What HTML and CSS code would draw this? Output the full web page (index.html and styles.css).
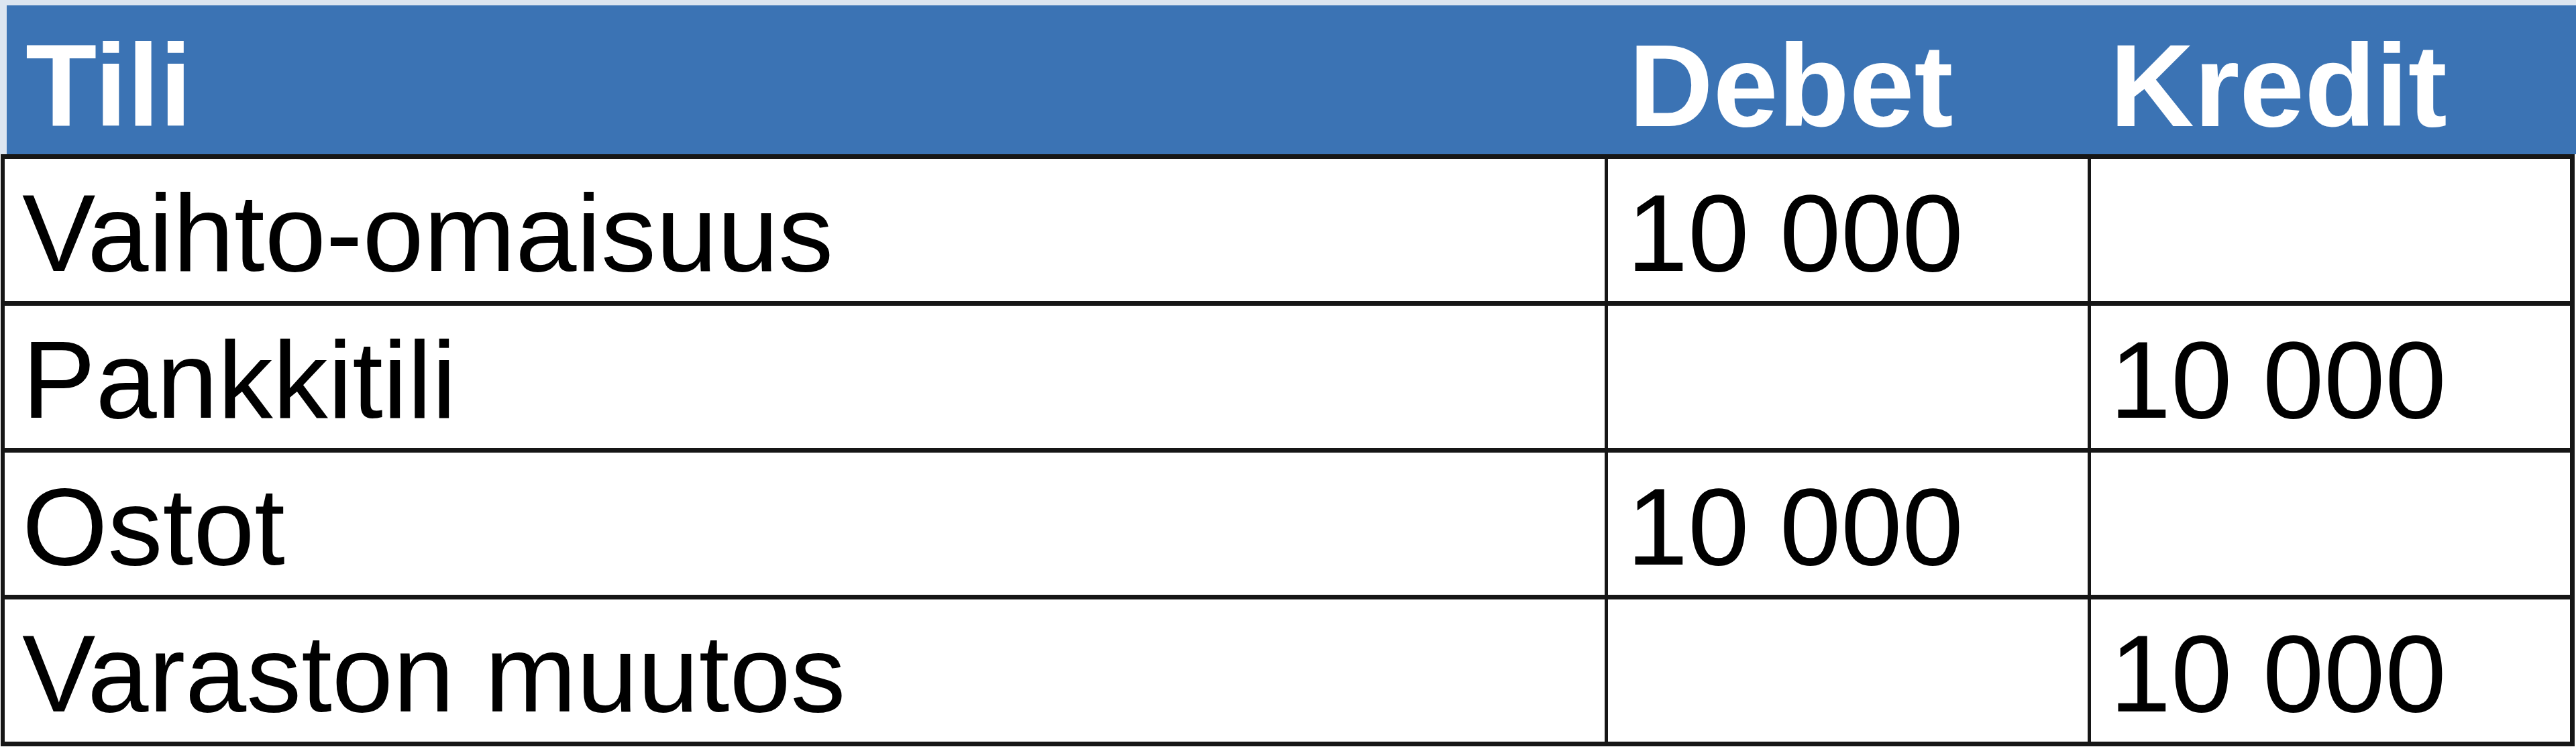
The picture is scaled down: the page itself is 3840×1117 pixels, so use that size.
FILE: index.html
```html
<!DOCTYPE html>
<html lang="fi">
<head>
<meta charset="utf-8">
<title>Tili – Debet – Kredit</title>
<link rel="stylesheet" href="styles.css">
</head>
<body>
<div class="sheet">
  <div class="head" role="row">
    <div class="hcell" role="columnheader">Tili</div>
    <div class="hcell hcell-num" role="columnheader">Debet</div>
    <div class="hcell" role="columnheader">Kredit</div>
  </div>
  <div class="grid" role="table">
    <div class="cell cell-name">Vaihto-omaisuus</div>
    <div class="cell">10 000</div>
    <div class="cell cell-last"></div>

    <div class="cell cell-name">Pankkitili</div>
    <div class="cell"></div>
    <div class="cell cell-last">10 000</div>

    <div class="cell cell-name">Ostot</div>
    <div class="cell">10 000</div>
    <div class="cell cell-last"></div>

    <div class="cell cell-name">Varaston muutos</div>
    <div class="cell"></div>
    <div class="cell cell-last">10 000</div>
  </div>
</div>
</body>
</html>
```

FILE: styles.css
```css
* {
  box-sizing: border-box;
}

html, body {
  margin: 0;
  padding: 0;
  background: #ffffff;
}

body {
  font-family: "Liberation Sans", Arial, sans-serif;
  color: #000000;
}

.sheet {
  width: 3840px;
  height: 1117px;
  overflow: hidden;
  background: linear-gradient(#dce5f0 0, #dce5f0 230px, #ffffff 230px);
  padding-top: 8px;
}

.head {
  margin-left: 10px;
  height: 222px;
  background: #3b73b4;
  display: grid;
  grid-template-columns: 2387px 720px 723px;
}

.hcell {
  color: #ffffff;
  font-weight: bold;
  font-size: 174px;
  line-height: normal;
  padding: 19px 0 0 28px;
  white-space: nowrap;
}

.hcell-num {
  padding-left: 31px;
}

.grid {
  margin-left: 1px;
  width: 3837px;
  display: grid;
  grid-template-columns: 2390px 720px 721px;
  grid-auto-rows: 219px;
  border-top: 7px solid #161616;
  border-left: 6px solid #161616;
  background: #ffffff;
}

.cell {
  font-size: 164px;
  line-height: normal;
  padding: 17px 0 0 28px;
  border-right: 5px solid #161616;
  border-bottom: 7px solid #161616;
  white-space: nowrap;
}

.cell-name {
  padding-left: 26px;
}

.cell-last {
  border-right-width: 7px;
}
```
